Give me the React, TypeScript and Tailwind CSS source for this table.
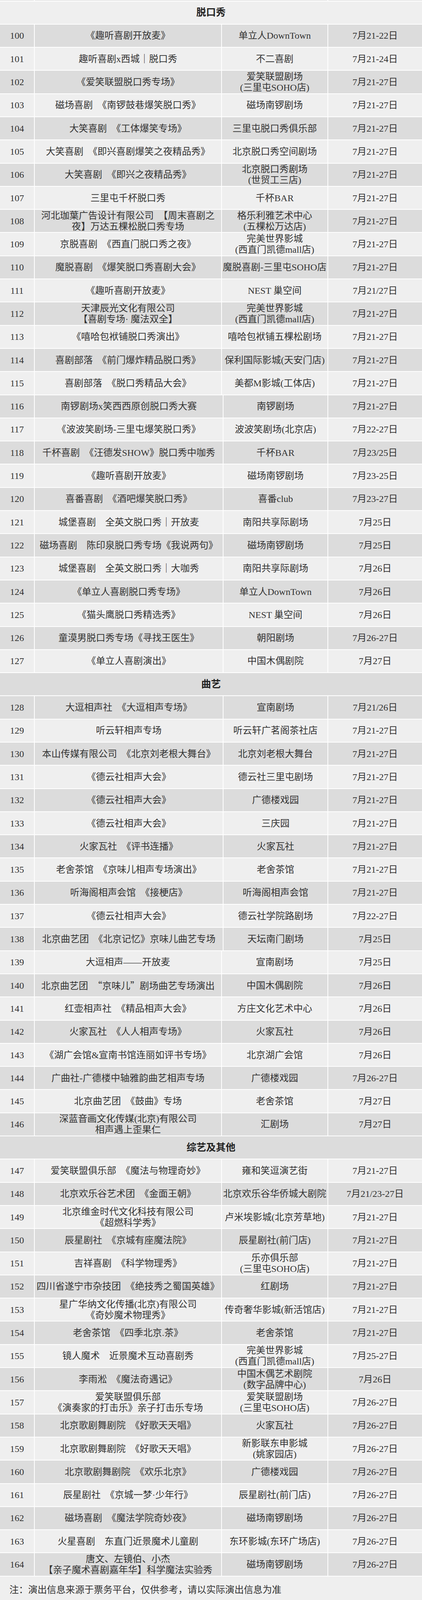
import React from "react";

type Row = {
  n: number;
  p: string | string[];
  v: string | string[];
  d: string;
  wide?: boolean;
};

const talk: Row[] = [
  { n: 100, p: "《趣听喜剧开放麦》", v: "单立人DownTown", d: "7月21-22日" },
  { n: 101, p: "趣听喜剧x西城｜脱口秀", v: "不二喜剧", d: "7月21-24日" },
  { n: 102, p: "《爱笑联盟脱口秀专场》", v: ["爱笑联盟剧场", "(三里屯SOHO店)"], d: "7月21-27日" },
  { n: 103, p: "磁场喜剧　《南锣鼓巷爆笑脱口秀》", v: "磁场南锣剧场", d: "7月21-27日" },
  { n: 104, p: "大笑喜剧　《工体爆笑专场》", v: "三里屯脱口秀俱乐部", d: "7月21-27日" },
  { n: 105, p: "大笑喜剧　《即兴喜剧爆笑之夜精品秀》", v: "北京脱口秀空间剧场", d: "7月21-27日" },
  { n: 106, p: "大笑喜剧　《即兴之夜精品秀》", v: ["北京脱口秀剧场", "(世贸工三店)"], d: "7月21-27日" },
  { n: 107, p: "三里屯千杯脱口秀", v: "千杯BAR", d: "7月21-27日" },
  { n: 108, p: ["河北珈葉广告设计有限公司　【周末喜剧之", "夜】万达五棵松脱口秀专场"], v: ["格乐利雅艺术中心", "(五棵松万达店)"], d: "7月21-27日" },
  { n: 109, p: "京脱喜剧　《西直门脱口秀之夜》", v: ["完美世界影城", "(西直门凯德mall店)"], d: "7月21-27日" },
  { n: 110, p: "魔脱喜剧　《爆笑脱口秀喜剧大会》", v: "魔脱喜剧-三里屯SOHO店", d: "7月21-27日" },
  { n: 111, p: "《趣听喜剧开放麦》", v: "NEST 巢空间", d: "7月21/27日" },
  { n: 112, p: ["天津辰光文化有限公司", "【喜剧专场· 魔法双全】"], v: ["完美世界影城", "(西直门凯德mall店)"], d: "7月21-27日" },
  { n: 113, p: "《嘻哈包袱铺脱口秀演出》", v: "嘻哈包袱铺五棵松剧场", d: "7月21-27日" },
  { n: 114, p: "喜剧部落　《前门爆炸精品脱口秀》", v: "保利国际影城(天安门店)", d: "7月21-27日" },
  { n: 115, p: "喜剧部落　《脱口秀精品大会》", v: "美都M影城(工体店)", d: "7月21-27日" },
  { n: 116, p: "南锣剧场x笑西西原创脱口秀大赛", v: "南锣剧场", d: "7月21-27日", wide: true },
  { n: 117, p: "《波波笑剧场-三里屯爆笑脱口秀》", v: "波波笑剧场(北京店)", d: "7月22-27日", wide: true },
  { n: 118, p: "千杯喜剧　《汪德发SHOW》脱口秀中咖秀", v: "千杯BAR", d: "7月23/25日", wide: true },
  { n: 119, p: "《趣听喜剧开放麦》", v: "磁场南锣剧场", d: "7月23-25日", wide: true },
  { n: 120, p: "喜番喜剧　《酒吧爆笑脱口秀》", v: "喜番club", d: "7月23-27日", wide: true },
  { n: 121, p: "城堡喜剧　全英文脱口秀｜开放麦", v: "南阳共享际剧场", d: "7月25日", wide: true },
  { n: 122, p: "磁场喜剧　陈印泉脱口秀专场《我说两句》", v: "磁场南锣剧场", d: "7月25日", wide: true },
  { n: 123, p: "城堡喜剧　全英文脱口秀｜大咖秀", v: "南阳共享际剧场", d: "7月26日", wide: true },
  { n: 124, p: "《单立人喜剧脱口秀专场》", v: "单立人DownTown", d: "7月26日", wide: true },
  { n: 125, p: "《猫头鹰脱口秀精选秀》", v: "NEST 巢空间", d: "7月26日", wide: true },
  { n: 126, p: "童漠男脱口秀专场《寻找王医生》", v: "朝阳剧场", d: "7月26-27日", wide: true },
  { n: 127, p: "《单立人喜剧演出》", v: "中国木偶剧院", d: "7月27日", wide: true },
];

const quyi: Row[] = [
  { n: 128, p: "大逗相声社　《大逗相声专场》", v: "宣南剧场", d: "7月21/26日", wide: true },
  { n: 129, p: "听云轩相声专场", v: "听云轩广茗阁茶社店", d: "7月21-27日", wide: true },
  { n: 130, p: "本山传媒有限公司　《北京刘老根大舞台》", v: "北京刘老根大舞台", d: "7月21-27日", wide: true },
  { n: 131, p: "《德云社相声大会》", v: "德云社三里屯剧场", d: "7月21-27日", wide: true },
  { n: 132, p: "《德云社相声大会》", v: "广德楼戏园", d: "7月21-27日", wide: true },
  { n: 133, p: "《德云社相声大会》", v: "三庆园", d: "7月21-27日", wide: true },
  { n: 134, p: "火家瓦社　《评书连播》", v: "火家瓦社", d: "7月21-27日", wide: true },
  { n: 135, p: "老舍茶馆　《京味儿相声专场演出》", v: "老舍茶馆", d: "7月21-27日", wide: true },
  { n: 136, p: "听海阁相声会馆　《接梗店》", v: "听海阁相声会馆", d: "7月21-27日", wide: true },
  { n: 137, p: "《德云社相声大会》", v: "德云社学院路剧场", d: "7月22-27日", wide: true },
  { n: 138, p: "北京曲艺团　《北京记忆》京味儿曲艺专场", v: "天坛南门剧场", d: "7月25日", wide: true },
  { n: 139, p: "大逗相声——开放麦", v: "宣南剧场", d: "7月25日" },
  { n: 140, p: "北京曲艺团　“京味儿”剧场曲艺专场演出", v: "中国木偶剧院", d: "7月26日" },
  { n: 141, p: "红壶相声社　《精品相声大会》", v: "方庄文化艺术中心", d: "7月26日" },
  { n: 142, p: "火家瓦社　《人人相声专场》", v: "火家瓦社", d: "7月26日" },
  { n: 143, p: "《湖广会馆&宣南书馆连丽如评书专场》", v: "北京湖广会馆", d: "7月26日" },
  { n: 144, p: "广曲社-广德楼中轴雅韵曲艺相声专场", v: "广德楼戏园", d: "7月26-27日" },
  { n: 145, p: "北京曲艺团　《鼓曲》专场", v: "老舍茶馆", d: "7月27日" },
  { n: 146, p: ["深蓝音画文化传媒(北京)有限公司", "相声遇上歪果仁"], v: "汇剧场", d: "7月27日" },
];

const other: Row[] = [
  { n: 147, p: "爱笑联盟俱乐部　《魔法与物理奇妙》", v: "雍和笑逗演艺街", d: "7月21-27日" },
  { n: 148, p: "北京欢乐谷艺术团　《金面王朝》", v: "北京欢乐谷华侨城大剧院", d: "7月21/23-27日" },
  { n: 149, p: ["北京维金时代文化科技有限公司", "《超燃科学秀》"], v: "卢米埃影城(北京芳草地)", d: "7月21-27日" },
  { n: 150, p: "辰星剧社　《京城有座魔法院》", v: "辰星剧社(前门店)", d: "7月21-27日" },
  { n: 151, p: "吉祥喜剧　《科学物理秀》", v: ["乐亦俱乐部", "(三里屯SOHO店)"], d: "7月21-27日" },
  { n: 152, p: "四川省遂宁市杂技团　《绝技秀之蜀国英雄》", v: "红剧场", d: "7月21-27日" },
  { n: 153, p: ["星广华纳文化传播(北京)有限公司", "《奇妙魔术物理秀》"], v: "传奇奢华影城(新活馆店)", d: "7月21-27日" },
  { n: 154, p: "老舍茶馆　《四季北京.茶》", v: "老舍茶馆", d: "7月21-27日" },
  { n: 155, p: "镜人魔术　近景魔术互动喜剧秀", v: ["完美世界影城", "(西直门凯德mall店)"], d: "7月25-27日" },
  { n: 156, p: "李雨淞　《魔法奇遇记》", v: ["中国木偶艺术剧院", "(数字品牌中心)"], d: "7月26日" },
  { n: 157, p: ["爱笑联盟俱乐部", "《演奏家的打击乐》亲子打击乐专场"], v: ["爱笑联盟剧场", "(三里屯SOHO店)"], d: "7月26-27日" },
  { n: 158, p: "北京歌剧舞剧院　《好歌天天唱》", v: "火家瓦社", d: "7月26-27日" },
  { n: 159, p: "北京歌剧舞剧院　《好歌天天唱》", v: ["新影联东申影城", "(姚家园店)"], d: "7月26-27日" },
  { n: 160, p: "北京歌剧舞剧院　《欢乐北京》", v: "广德楼戏园", d: "7月26-27日" },
  { n: 161, p: "辰星剧社　《京城一梦·少年行》", v: "辰星剧社(前门店)", d: "7月26-27日" },
  { n: 162, p: "磁场喜剧　《魔法学院奇妙夜》", v: "磁场南锣剧场", d: "7月26-27日" },
  { n: 163, p: "火星喜剧　东直门近景魔术儿童剧", v: "东环影城(东环广场店)", d: "7月26-27日" },
  { n: 164, p: ["唐文、左镜伯、小杰", "【亲子魔术喜剧嘉年华】科学魔法实验秀"], v: "磁场南锣剧场", d: "7月26-27日" },
];

// quotes need the CJK font so they come out full width
const withQuotes = (s: string) => {
  if (!s.includes("“")) return s;
  const parts = s.split(/([“”])/);
  return parts.map((part, i) =>
    part === "“" || part === "”" ? (
      <span key={i} className="font-['Noto_Sans_CJK_SC',sans-serif]">
        {part}
      </span>
    ) : (
      part
    )
  );
};

const Lines = ({ value }: { value: string | string[] }) =>
  Array.isArray(value) ? (
    <div className="flex flex-col items-center">
      {value.map((line) => (
        <span key={line} className="whitespace-nowrap">
          {line}
        </span>
      ))}
    </div>
  ) : (
    <span className="whitespace-nowrap">{withQuotes(value)}</span>
  );

const cell = "flex items-center justify-center text-center";

// rows share the window height, so the whole list fits whatever the frame is
const TableRow = ({ row }: { row: Row }) => {
  const bg = row.n % 2 === 0 ? "bg-[#dcdcdc]" : "bg-[#efefef]";
  return (
    <div
      className={`grid min-h-0 flex-1 gap-x-[2px] ${
        row.wide ? "grid-cols-[87px_481px_266px_1fr]" : "grid-cols-[87px_477px_270px_1fr]"
      }`}
    >
      <div className={`${cell} ${bg}`}>{row.n}</div>
      <div className={`${cell} ${bg}`}>
        <Lines value={row.p} />
      </div>
      <div className={`${cell} ${bg}`}>
        <Lines value={row.v} />
      </div>
      <div className={`${cell} ${bg}`}>{row.d}</div>
    </div>
  );
};

const Section = ({ title, dark }: { title: string; dark?: boolean }) => (
  <div
    className={`flex min-h-0 flex-1 items-center justify-center text-[25px] font-bold text-[#222] ${
      dark ? "bg-[#dcdcdc]" : "bg-[#efefef]"
    }`}
  >
    {title}
  </div>
);

export default function App() {
  return (
    <div className="flex h-screen w-[1080px] flex-col gap-[2px] overflow-hidden bg-white font-['Liberation_Serif','Noto_Sans_CJK_SC',serif] text-[24px] leading-[28px] text-[#333]">
      <div className="grid h-[1.5px] shrink-0 grid-cols-[87px_477px_270px_1fr] gap-x-[2px]">
        <div className="bg-[#e6e6e6]" />
        <div className="bg-[#e6e6e6]" />
        <div className="bg-[#e6e6e6]" />
        <div className="bg-[#e6e6e6]" />
      </div>
      <Section title="脱口秀" />
      {talk.map((r) => (
        <TableRow key={r.n} row={r} />
      ))}
      <Section title="曲艺" dark />
      {quyi.map((r) => (
        <TableRow key={r.n} row={r} />
      ))}
      <Section title="综艺及其他" dark />
      {other.map((r) => (
        <TableRow key={r.n} row={r} />
      ))}
      <div className="flex min-h-0 flex-[0.91] items-center bg-[#efefef] pl-[24px] pt-[8px]">
        注：演出信息来源于票务平台，仅供参考，请以实际演出信息为准
      </div>
    </div>
  );
}
